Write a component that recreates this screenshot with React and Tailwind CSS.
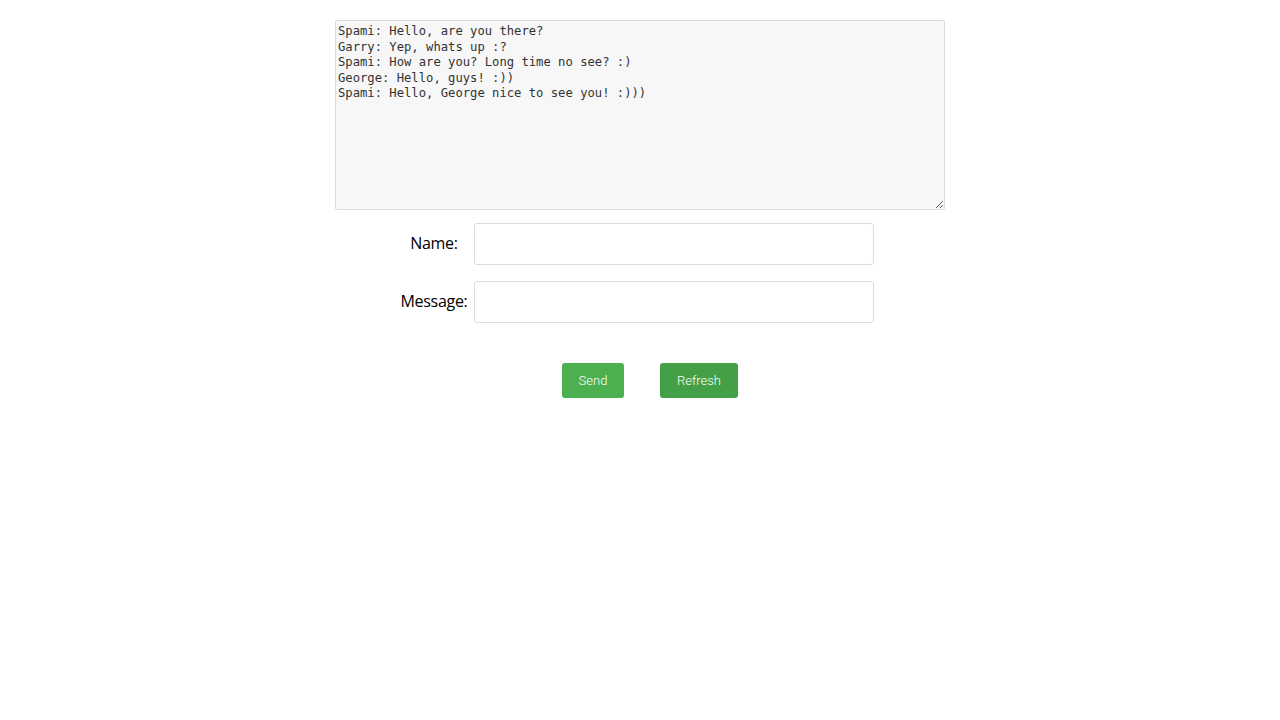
import React from "react";

const LOG = `Spami: Hello, are you there?
Garry: Yep, whats up :?
Spami: How are you? Long time no see? :)
George: Hello, guys! :))
Spami: Hello, George nice to see you! :)))`;

export default function App() {
  return (
    <div className="min-h-screen w-full bg-white pt-5">
      <div className="mx-auto w-[610px] flex flex-col">
        {/* chat log */}
        <textarea
          readOnly
          defaultValue={LOG}
          className="block w-[610px] h-[190px] rounded-[2px] border border-[#dcdcdc] bg-[#f7f7f7] px-[2px] pt-[3px] pb-[2px] text-[12.2px] leading-[15.5px] text-[#333] outline-none resize"
          style={{ fontFamily: '"DejaVu Sans Mono", monospace' }}
        />

        {/* form rows */}
        <div className="mt-[13px] flex flex-col gap-[16px] font-['Open_Sans',sans-serif] text-[16px] text-black">
          <div className="flex items-center gap-[2px] pl-[61px]">
            <label className="w-[76px] pb-[2px] text-center tracking-[-0.3px]">Name:</label>
            <input className="h-[42px] w-[400px] rounded-[3px] border border-[#dcdcdc] bg-white px-2 outline-none" />
          </div>
          <div className="flex items-center gap-[2px] pl-[61px]">
            <label className="w-[76px] pb-[2px] text-center tracking-[-0.3px]">Message:</label>
            <input className="h-[42px] w-[400px] rounded-[3px] border border-[#dcdcdc] bg-white px-2 outline-none" />
          </div>
        </div>

        {/* actions */}
        <div className="mt-[40px] flex gap-[36px] pl-[227px] font-['Roboto',sans-serif] text-[13px] font-light text-white">
          <button className="h-[35px] w-[62px] rounded-[3px] bg-[#4caf50]">Send</button>
          <button className="h-[35px] w-[78px] rounded-[3px] bg-[#43a047]">Refresh</button>
        </div>
      </div>
    </div>
  );
}
